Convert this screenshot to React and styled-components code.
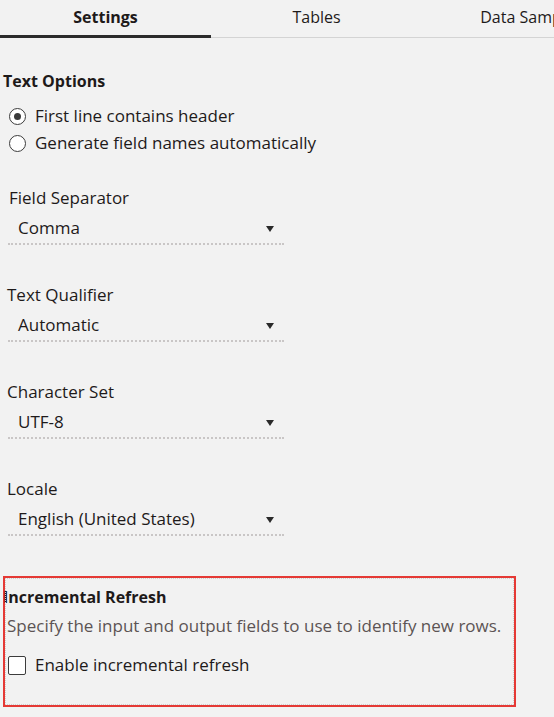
import React from "react";
import styled, { createGlobalStyle } from "styled-components";

const Global = createGlobalStyle`
  html, body { margin: 0; padding: 0; background: #f2f2f2; }
  body { font-family: "Open Sans", "Noto Sans", sans-serif; color: #1e1a1a; }
`;

const Page = styled.div`
  width: 554px;
  height: 717px;
  overflow: hidden;
  background: #f2f2f2;
`;

const TabBar = styled.div`
  display: grid;
  grid-template-columns: repeat(3, 211px);
  height: 38px;
  border-bottom: 1px solid #d4d4d4;
  box-sizing: border-box;
`;

const Tab = styled.div`
  display: flex;
  justify-content: center;
  align-items: center;
  height: 38px;
  padding-bottom: 1px;
  box-sizing: border-box;
  font-size: 16px;
  font-weight: ${(p) => (p.$active ? 700 : 400)};
  white-space: nowrap;
  overflow: visible;
  border-bottom: 3px solid ${(p) => (p.$active ? "#2b2b2b" : "transparent")};
  margin-bottom: -1px;
`;

const Content = styled.div`
  padding-top: 33px;
`;

const SectionTitle = styled.div`
  font-size: 16px;
  font-weight: 700;
  padding-left: 3px;
  line-height: 20px;
`;

const RadioGroup = styled.div`
  display: flex;
  flex-direction: column;
  gap: 7px;
  margin-top: 15px;
  padding-left: 9px;
`;

const RadioRow = styled.label`
  display: flex;
  align-items: center;
  gap: 9px;
  font-size: 17px;
  line-height: 20px;
`;

const RadioCircle = styled.span`
  width: 17px;
  height: 17px;
  flex: none;
  border-radius: 50%;
  border: 1.5px solid #3c3c3c;
  background: #fff;
  box-sizing: border-box;
  display: flex;
  align-items: center;
  justify-content: center;
  &::after {
    content: "";
    width: 7px;
    height: 7px;
    border-radius: 50%;
    background: ${(p) => (p.$checked ? "#3a3a3a" : "transparent")};
  }
`;

const Fields = styled.div`
  margin-top: 35px;
  display: flex;
  flex-direction: column;
  gap: 40px;
`;

const Field = styled.div`
  display: flex;
  flex-direction: column;
  padding-left: 8px;
  width: 276px;
`;

const FieldLabel = styled.div`
  font-size: 17px;
  line-height: 20px;
  margin-left: ${(p) => p.$shift || 0}px;
`;

const Select = styled.div`
  display: flex;
  align-items: center;
  justify-content: space-between;
  height: 34px;
  padding: 0 10px;
  margin-top: 3px;
  border-bottom: 2px dotted #c9c6c6;
  font-size: 17px;
  box-sizing: border-box;
`;

const Caret = styled.span`
  width: 0;
  height: 0;
  border-left: 4.5px solid transparent;
  border-right: 4.5px solid transparent;
  border-top: 6px solid #2a2a2a;
  margin-top: 3px;
`;

const RefreshBox = styled.div`
  margin-top: 40px;
  margin-left: 3px;
  width: 513px;
  height: 131px;
  box-sizing: border-box;
  border: 2px solid #e53935;
  outline: 1px dotted #cfcfcf;
  outline-offset: -3px;
  padding-top: 9px;
`;

const BoxTitle = styled.div`
  font-size: 16px;
  font-weight: 700;
  line-height: 20px;
  margin-left: -2px;
`;

const Description = styled.div`
  font-size: 17px;
  line-height: 20px;
  color: #5c5454;
  margin-top: 9px;
  padding-left: 2px;
  white-space: nowrap;
`;

const CheckRow = styled.label`
  display: flex;
  align-items: center;
  gap: 9px;
  margin-top: 19px;
  padding-left: 3px;
  font-size: 17px;
  line-height: 20px;
`;

const CheckBox = styled.span`
  width: 18px;
  height: 19px;
  flex: none;
  border: 1.5px solid #3c3c3c;
  border-radius: 2px;
  background: #fff;
  box-sizing: border-box;
`;

const fields = [
  { label: "Field Separator", value: "Comma", shift: 1 },
  { label: "Text Qualifier", value: "Automatic", shift: -1 },
  { label: "Character Set", value: "UTF-8", shift: -1 },
  { label: "Locale", value: "English (United States)", shift: -1 },
];

export default function App() {
  return (
    <Page>
      <Global />
      <TabBar>
        <Tab $active>Settings</Tab>
        <Tab>Tables</Tab>
        <Tab>Data Sample</Tab>
      </TabBar>
      <Content>
        <SectionTitle>Text Options</SectionTitle>
        <RadioGroup>
          <RadioRow>
            <RadioCircle $checked />
            First line contains header
          </RadioRow>
          <RadioRow>
            <RadioCircle />
            Generate field names automatically
          </RadioRow>
        </RadioGroup>
        <Fields>
          {fields.map((f) => (
            <Field key={f.label}>
              <FieldLabel $shift={f.shift}>{f.label}</FieldLabel>
              <Select>
                <span>{f.value}</span>
                <Caret />
              </Select>
            </Field>
          ))}
        </Fields>
        <RefreshBox>
          <BoxTitle>Incremental Refresh</BoxTitle>
          <Description>Specify the input and output fields to use to identify new rows.</Description>
          <CheckRow>
            <CheckBox />
            Enable incremental refresh
          </CheckRow>
        </RefreshBox>
      </Content>
    </Page>
  );
}
